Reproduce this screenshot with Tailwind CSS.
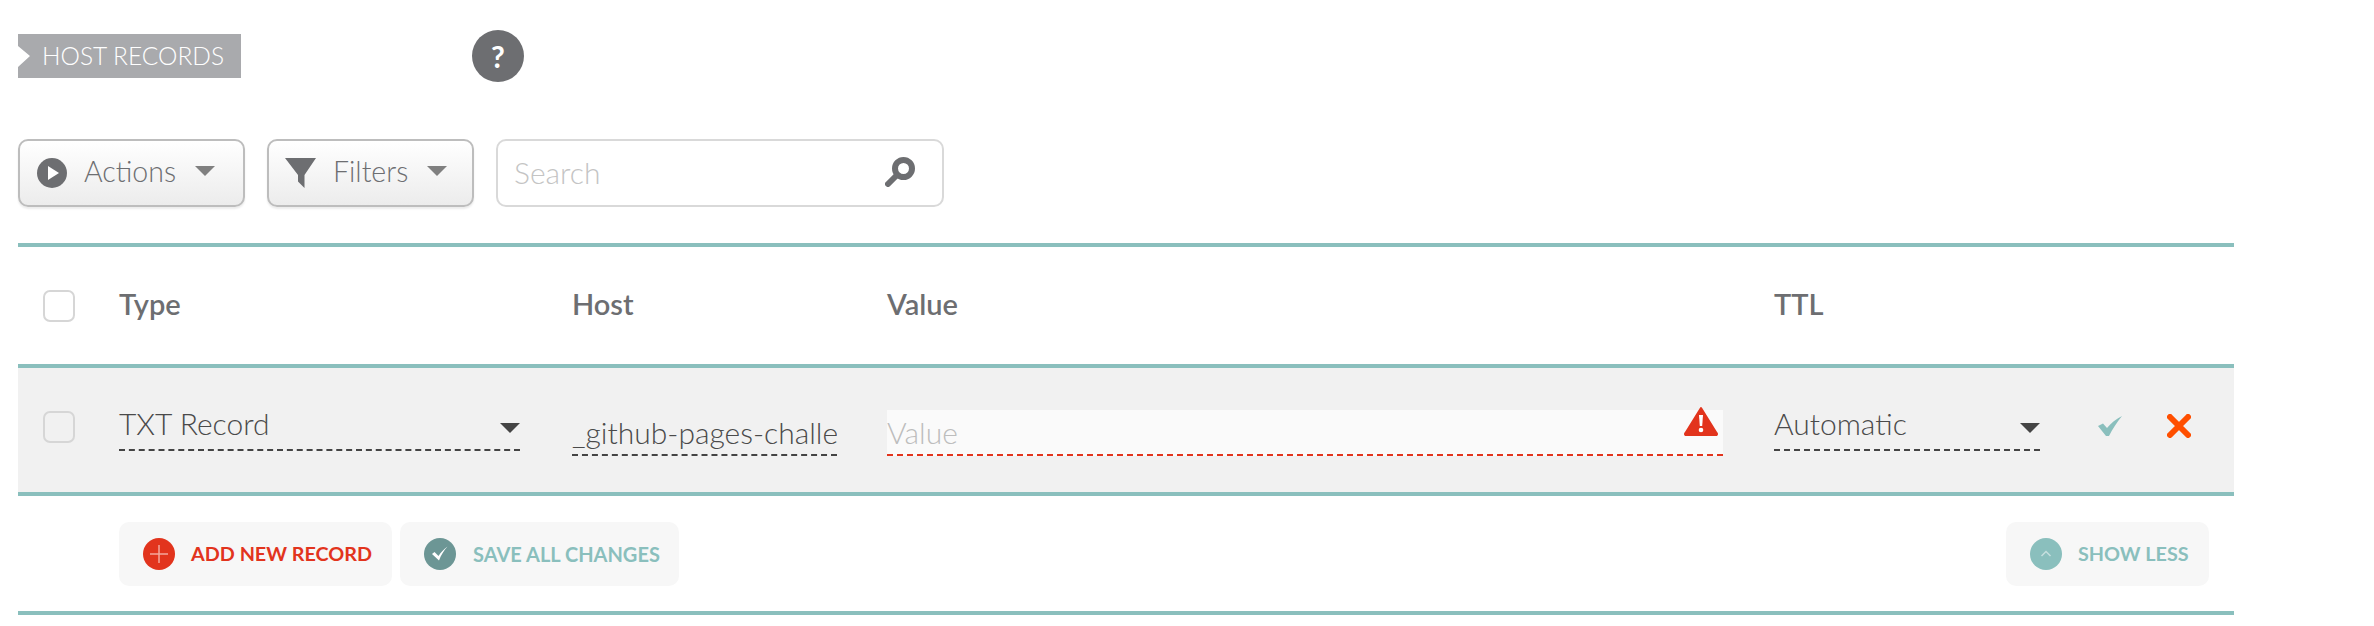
<!DOCTYPE html>
<html lang="en">
<head>
  <meta charset="UTF-8" />
  <title>Host Records</title>
  <script src="https://cdn.jsdelivr.net/npm/@tailwindcss/browser@4"></script>
</head>
<body class="bg-white font-['Lato','Liberation_Sans',sans-serif] text-[#6d6e71]">
<main class="w-[2216px] ml-[18px] pt-[30px]">

  <!-- title -->
  <div class="flex items-center h-[52px]">
    <div class="h-[44px] w-[223px] bg-[#a9aaad] text-white text-[24.500px] font-light pl-[24px] flex items-center [clip-path:polygon(0_0,100%_0,100%_100%,0_100%,0_75%,12px_50%,0_27%)]">HOST RECORDS</div>
    <div class="ml-[231px] w-[52px] h-[52px] rounded-full bg-[#6d6e71] text-white flex items-center justify-center text-[30px] font-bold">?</div>
  </div>

  <!-- toolbar -->
  <div class="flex mt-[57px] h-[68px]">
    <button class="w-[227px] border-2 border-[#bdbdbd] rounded-[10px] bg-gradient-to-b from-white to-[#ececec] shadow-[0_2px_2px_rgba(0,0,0,0.08)] flex items-center pl-[17px]">
      <svg width="30" height="30" viewBox="0 0 30 30"><circle cx="15" cy="15" r="15" fill="#6d6e71"/><path d="M11 8l11 7-11 7z" fill="#fff"/></svg>
      <span class="ml-[17px] -mt-[3px] text-[28.500px] font-light leading-none">Actions</span>
      <svg class="ml-[19px] -mt-[4px]" width="20" height="10" viewBox="0 0 20 10"><path d="M0 0h20L10 10z" fill="#808080"/></svg>
    </button>
    <button class="ml-[22px] w-[207px] border-2 border-[#bdbdbd] rounded-[10px] bg-gradient-to-b from-white to-[#ececec] shadow-[0_2px_2px_rgba(0,0,0,0.08)] flex items-center pl-[16px]">
      <svg width="31" height="30" viewBox="0 0 31 30"><path d="M0 0h31L19.500 17v13L13 23.500V17z" fill="#6d6e71"/></svg>
      <span class="ml-[17px] -mt-[3px] text-[28.500px] font-light leading-none">Filters</span>
      <svg class="ml-[19px] -mt-[4px]" width="20" height="10" viewBox="0 0 20 10"><path d="M0 0h20L10 10z" fill="#808080"/></svg>
    </button>
    <div class="ml-[22px] w-[448px] border-2 border-[#d9d9d9] rounded-[10px] bg-white flex items-center pl-[16px] pr-[27px]">
      <input placeholder="Search" class="flex-1 min-w-0 -mt-[2px] text-[30px] font-light outline-none placeholder:text-[#c4c4c4]" />
      <svg class="-mt-[2px]" width="30" height="30" viewBox="0 0 30 30"><circle cx="18.500" cy="11.500" r="8.500" fill="none" stroke="#6d6e71" stroke-width="6"/><path d="M11 19l-8 8" stroke="#6d6e71" stroke-width="6" stroke-linecap="round"/></svg>
    </div>
  </div>

  <!-- table head -->
  <div class="mt-[36px] box-content h-[117px] border-y-4 border-[#8abfbd] grid grid-cols-[101px_453px_315px_887px_1fr] items-center text-[29px] font-semibold">
    <div class="ml-[25px] w-[32px] h-[32px] border-2 border-[#d6d6d6] rounded-[7px] bg-white"></div>
    <div class="-mt-[3px]">Type</div>
    <div class="-mt-[3px]">Host</div>
    <div class="-mt-[3px]">Value</div>
    <div class="-mt-[3px]">TTL</div>
  </div>

  <!-- edit row -->
  <div class="h-[124px] bg-[#f1f1f1] grid grid-cols-[101px_453px_315px_887px_1fr] items-start pt-[43px] text-[#4a4a4a] text-[30px] font-light">
    <div class="ml-[25px] w-[32px] h-[32px] border-2 border-[#d6d6d6] rounded-[7px]"></div>
    <div class="w-[401px] h-[44px] -mt-[4px] border-b-2 border-dashed border-[#444] flex items-start justify-between">
      <span class="leading-[32px]">TXT Record</span>
      <svg class="mt-[16px]" width="20" height="10" viewBox="0 0 20 10"><path d="M0 0h20L10 10z" fill="#444"/></svg>
    </div>
    <div class="w-[265px] h-[46px] -mt-[1px] border-b-2 border-dashed border-[#444]">
      <input value="_github-pages-challenge-username" class="w-full h-[37px] outline-none bg-transparent" />
    </div>
    <div class="w-[836px] h-[46px] -mt-[1px] bg-[#fafafa] border-b-2 border-dashed border-[#e2341d] relative">
      <input placeholder="Value" class="w-full h-[37px] outline-none placeholder:text-[#bdbdbd]" />
      <svg class="absolute top-[-4px] right-[5px]" width="34" height="30" viewBox="0 0 34 30"><path d="M17 2L32.500 27a1.500 1.500 0 0 1-1.500 2.500H3A1.500 1.500 0 0 1 1.500 27z" fill="#e2341d" stroke="#e2341d" stroke-width="2" stroke-linejoin="round"/><path d="M15 9h4l-.8 11h-2.400z" fill="#fff"/><circle cx="17" cy="24" r="2.300" fill="#fff"/></svg>
    </div>
    <div class="flex items-start">
      <div class="w-[266px] h-[44px] -mt-[4px] border-b-2 border-dashed border-[#444] flex items-start justify-between">
        <span class="leading-[32px]">Automatic</span>
        <svg class="mt-[16px]" width="20" height="10" viewBox="0 0 20 10"><path d="M0 0h20L10 10z" fill="#444"/></svg>
      </div>
      <svg class="ml-[58px] mt-[5px]" width="24" height="20" viewBox="0 0 24 20"><path d="M0 10l5-2.500 4 4.500C13 7 18 3 24 0 19 6 14.500 13 11 20H8z" fill="#8abfbd"/></svg>
      <svg class="ml-[45px] mt-[3px]" width="24" height="24" viewBox="0 0 24 24"><path d="M3 3l18 18M21 3L3 21" stroke="#ff4f00" stroke-width="6" stroke-linecap="round"/></svg>
    </div>
  </div>

  <!-- actions -->
  <div class="box-content h-[115px] border-y-4 border-[#8abfbd] flex items-center pl-[101px] pr-[25px] text-[19.800px] font-bold">
    <button class="w-[273px] h-[64px] rounded-[10px] bg-[#f7f7f7] flex items-center pl-[24px] text-[#e2341d]">
      <svg width="32" height="32" viewBox="0 0 32 32"><circle cx="16" cy="16" r="16" fill="#e2341d"/><path d="M16 7v18M7 16h18" stroke="#f4a79c" stroke-width="1.500"/></svg>
      <span class="ml-[16px]">ADD NEW RECORD</span>
    </button>
    <button class="ml-[8px] w-[279px] h-[64px] rounded-[10px] bg-[#f7f7f7] flex items-center pl-[24px] text-[#8abfbd] text-[20px]">
      <svg width="32" height="32" viewBox="0 0 32 32"><circle cx="16" cy="16" r="16" fill="#6c9695"/><path d="M8 16l2.500-2 4 4c2.500-4 5-6.500 9-9.500-3.500 4-6.500 8.500-8.500 14z" fill="#fff"/></svg>
      <span class="ml-[17px]">SAVE ALL CHANGES</span>
    </button>
    <button class="ml-auto w-[203px] h-[64px] rounded-[10px] bg-[#f7f7f7] flex items-center pl-[24px] text-[#8abfbd]">
      <svg width="32" height="32" viewBox="0 0 32 32"><circle cx="16" cy="16" r="16" fill="#8abfbd"/><path d="M11.500 18l4.500-4.500 4.500 4.500" fill="none" stroke="#c5dfde" stroke-width="1.500"/></svg>
      <span class="ml-[16px]">SHOW LESS</span>
    </button>
  </div>

</main>
</body>
</html>
